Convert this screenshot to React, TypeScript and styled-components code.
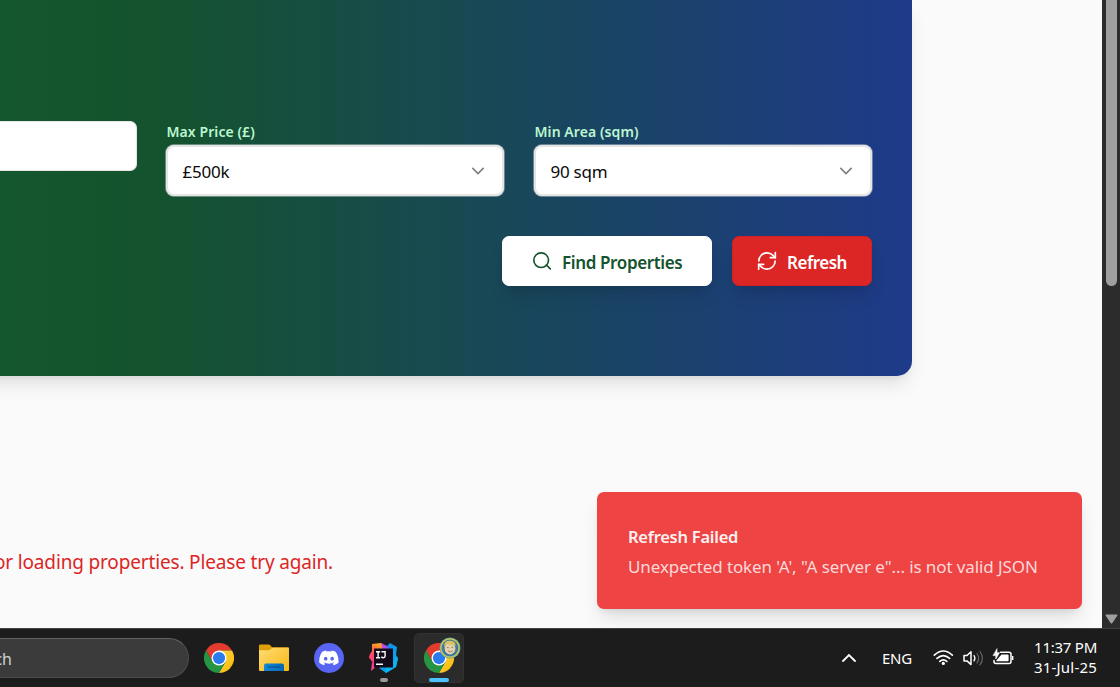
import React from 'react';
import styled, { createGlobalStyle } from 'styled-components';

const GlobalStyle = createGlobalStyle`
  * { box-sizing: border-box; }
  html, body { margin: 0; padding: 0; overflow: hidden; }
  body { font-family: 'Segoe UI', 'Noto Sans', 'Open Sans', sans-serif; }
`;

const Screen = styled.div`
  position: relative;
  width: 1120px;
  height: 687px;
  overflow: hidden;
  display: flex;
  flex-direction: column;
`;

const Browser = styled.div`
  display: flex;
  height: 628px;
`;

const Page = styled.main`
  width: 1102px;
  height: 628px;
  overflow: hidden;
  background: #fafafa;
`;

const Scrollbar = styled.div`
  width: 18px;
  background: #2c2c2c;
  display: flex;
  flex-direction: column;
  justify-content: space-between;
  align-items: center;
  padding-bottom: 4px;
`;

const Thumb = styled.div`
  width: 11px;
  height: 286px;
  margin-left: 1px;
  border-radius: 0 0 6px 6px;
  background: #9f9f9f;
`;

const Hero = styled.section`
  width: 952px;
  height: 376px;
  margin-left: -40px;
  border-radius: 0 0 15px 0;
  background: linear-gradient(to right, #166534 -570px, #14532d 191px, #1e3a8a 952px);
  box-shadow: 0 12px 19px -4px rgba(0, 0, 0, 0.1), 0 5px 8px -5px rgba(0, 0, 0, 0.1);
  padding: 121px 39px 0 40px;
`;

const Fields = styled.div`
  display: flex;
  gap: 28px;
  height: 77px;
`;

const TextInput = styled.div`
  width: 137px;
  height: 50px;
  background: #fff;
  border: 1px solid #e5e5e5;
  border-left: 0;
  border-radius: 0 7px 7px 0;
`;

const Field = styled.div`
  width: 340px;
`;

const T = styled.span<{ $size: number; $ls?: number; $weight?: number; $lh?: number; $color?: string }>`
  display: block;
  white-space: pre;
  font-size: ${p => p.$size}px;
  letter-spacing: ${p => p.$ls ?? 0}px;
  font-weight: ${p => p.$weight ?? 400};
  line-height: ${p => p.$lh ?? 20}px;
  color: ${p => p.$color ?? 'inherit'};
`;

const Label = styled(T)`
  margin: 0 0 2px 1.5px;
  padding-top: 1px;
`;

const Select = styled.div`
  height: 53px;
  border: 1px solid rgba(229, 229, 229, 0.4);
  border-radius: 9px;
  background: #fff;
  background-clip: padding-box;
  box-shadow: inset 0 0 0 2px #e5e5e5;
  display: flex;
  align-items: center;
  justify-content: space-between;
  padding: 0 18px 0 16.5px;
  ${T} { padding-top: 3px; }
`;

const Actions = styled.div`
  display: flex;
  justify-content: flex-end;
  gap: 20px;
  padding: 38px 1px 0 0;
`;

const Button = styled.div<{ $w: number; $pad: number; $bg: string; $fg: string; $edge: string }>`
  width: ${p => p.$w}px;
  height: 50px;
  padding-left: ${p => p.$pad}px;
  display: flex;
  align-items: center;
  border-radius: 7px;
  border: 1px solid ${p => p.$edge};
  background: ${p => p.$bg};
  color: ${p => p.$fg};
  box-shadow: 0 12px 19px -4px rgba(0, 0, 0, 0.12), 0 5px 8px -5px rgba(0, 0, 0, 0.1);
  svg { margin-right: 10px; flex: none; }
  ${T} { padding-top: 3px; }
`;

const Lower = styled.div`
  display: flex;
  justify-content: space-between;
  align-items: flex-start;
  padding: 116px 20px 0 0;
`;

const ErrorText = styled.div`
  width: 333px;
  margin-top: 56px;
  display: flex;
  justify-content: flex-end;
`;

const Toast = styled.div`
  width: 485px;
  height: 117px;
  padding: 32px 31px;
  border-radius: 7px;
  background: #ef4444;
  box-shadow: 0 12px 19px -4px rgba(0, 0, 0, 0.12), 0 5px 8px -5px rgba(0, 0, 0, 0.12);
`;

const Taskbar = styled.footer`
  height: 59px;
  background: #1c1c1c;
  border-top: 1px solid #414141;
  display: flex;
  align-items: center;
  color: #fff;
`;

const SearchBox = styled.div`
  width: 189px;
  height: 40px;
  border-radius: 0 20px 20px 0;
  background: #3b3b3b;
  border: 1px solid #4c4c4c;
  border-top-color: #626262;
  border-left: 0;
  display: flex;
  align-items: center;
`;

const SearchText = styled.div`
  width: 12px;
  padding-top: 2px;
  display: flex;
  justify-content: flex-end;
`;

const Apps = styled.div`
  display: flex;
  gap: 5px;
  margin-left: 5px;
`;

const AppTile = styled.div<{ $active?: boolean }>`
  position: relative;
  width: 50px;
  height: 50px;
  border-radius: 5px;
  display: flex;
  align-items: center;
  justify-content: center;
  background: ${p => (p.$active ? '#2b2b2b' : 'transparent')};
  border: 1px solid ${p => (p.$active ? '#323232' : 'transparent')};
`;

const Indicator = styled.i<{ $w: number; $c: string }>`
  position: absolute;
  bottom: 0;
  left: ${p => (48 - p.$w) / 2}px;
  width: ${p => p.$w}px;
  height: 4px;
  border-radius: 2px;
  background: ${p => p.$c};
`;

const Avatar = styled.svg`
  position: absolute;
  top: 3px;
  left: 24px;
`;

const Tray = styled.div`
  margin-left: auto;
  display: flex;
  align-items: center;
  padding-right: 23px;
`;

const Language = styled(T)`
  margin: 0 21px 0 25px;
`;

const Clock = styled.div`
  margin-left: 19px;
  margin-top: -3px;
  display: flex;
  flex-direction: column;
  align-items: flex-end;
`;

const Chevron = () => (
  <svg width="16" height="16" viewBox="0 0 16 16" fill="none" stroke="#7b7c80" strokeWidth="1.5">
    <path d="M2.3 4.9 8 10.6l5.7-5.7" />
  </svg>
);

const SearchIcon = () => (
  <svg width="20" height="20" viewBox="0 0 24 24" fill="none" stroke="currentColor" strokeWidth="2" strokeLinecap="round" strokeLinejoin="round">
    <circle cx="11" cy="11" r="8.8" />
    <path d="m22 21.5-4.7-4.7" />
  </svg>
);

const RefreshIcon = () => (
  <svg width="20" height="20" viewBox="0 0 24 24" fill="none" stroke="currentColor" strokeWidth="2" strokeLinecap="round" strokeLinejoin="round">
    <path d="M2.2 12a9.8 9.8 0 0 1 9.8-9.8 10.5 10.5 0 0 1 7.2 3L22 8" />
    <path d="M22 2v6h-6" />
    <path d="M21.8 12a9.8 9.8 0 0 1-9.8 9.8 10.5 10.5 0 0 1-7.2-3L2 16" />
    <path d="M8 16H2v6" />
  </svg>
);

const ChromeIcon = () => (
  <svg width="30" height="30" viewBox="0 0 48 48">
    <defs>
      <linearGradient id="cy" x1="0" y1="0" x2="1" y2="1"><stop offset="0" stopColor="#ffd54a" /><stop offset="1" stopColor="#f8b800" /></linearGradient>
    </defs>
    <path d="M24 12h20.8A24 24 0 0 0 3.2 12l10.4 18z" fill="#e33b2e" />
    <path d="M34.4 30 24 48A24 24 0 0 0 44.8 12H24z" fill="url(#cy)" />
    <path d="M13.6 30 3.2 12A24 24 0 0 0 24 48l10.4-18z" fill="#259544" />
    <circle cx="24" cy="24" r="12" fill="#fff" />
    <circle cx="24" cy="24" r="9.8" fill="#2a7bee" />
  </svg>
);

const FolderIcon = () => (
  <svg width="30" height="28" viewBox="0 0 30 28">
    <defs>
      <linearGradient id="fy" x1="0" y1="0" x2="1" y2="1"><stop offset="0" stopColor="#ffdc73" /><stop offset="1" stopColor="#f8b816" /></linearGradient>
      <linearGradient id="fb" x1="0" y1="0" x2="1" y2="0"><stop offset="0" stopColor="#1489d5" /><stop offset="1" stopColor="#0067b8" /></linearGradient>
    </defs>
    <path d="M0 1.5Q0 .5 1 .5h8.5q1 0 2 1L13 3.3h16q1 0 1 1V10H0z" fill="#dda006" />
    <path d="M0 6.2h9q1.5 0 2.5-.9l.8-.8q.8-.7 2-.7H29q1 0 1 1V26q0 1-1 1H1q-1 0-1-1z" fill="url(#fy)" />
    <path d="M5 27v-5.500q0-2 2-2h16q2 0 2 2V27z" fill="url(#fb)" />
    <rect x="8.5" y="22.5" width="13" height="1.1" rx=".5" fill="#084f86" />
  </svg>
);

const DiscordIcon = () => (
  <svg width="30" height="30" viewBox="0 0 30 30">
    <circle cx="15" cy="15" r="15" fill="#5865f2" />
    <g transform="translate(5.2 5.2) scale(.81)">
      <path fill="#fff" d="M20.317 4.37a19.79 19.79 0 0 0-4.885-1.515c-.21.376-.455.88-.623 1.275a18.3 18.3 0 0 0-5.618 0A13 13 0 0 0 8.56 2.855 19.7 19.7 0 0 0 3.68 4.37C.533 9.046-.32 13.58.1 18.057a19.9 19.9 0 0 0 5.993 3.03c.49-.66.91-1.36 1.27-2.08a12.8 12.8 0 0 1-1.92-.92l.47-.37c3.9 1.83 8.2 1.83 12.1 0l.47.37c-.61.36-1.25.67-1.92.92.36.72.78 1.42 1.27 2.08a19.8 19.8 0 0 0 6-3.03c.5-5.18-.84-9.67-3.52-13.69zM8.02 15.33c-1.18 0-2.16-1.09-2.16-2.42s.96-2.42 2.16-2.42c1.21 0 2.18 1.1 2.16 2.42 0 1.33-.95 2.42-2.16 2.42zm7.97 0c-1.18 0-2.15-1.09-2.15-2.42s.95-2.42 2.15-2.42c1.22 0 2.18 1.1 2.16 2.42 0 1.33-.94 2.42-2.16 2.42z" />
    </g>
  </svg>
);

const JetIcon = () => (
  <svg width="32" height="32" viewBox="0 0 32 32">
    <defs>
      <linearGradient id="jp" x1=".6" y1="0" x2=".4" y2="1"><stop offset="0" stopColor="#ffb01e" /><stop offset=".35" stopColor="#ff5a50" /><stop offset=".65" stopColor="#ff3487" /><stop offset="1" stopColor="#f04a9a" /></linearGradient>
      <linearGradient id="jb" x1="0" y1="0" x2="1" y2="1"><stop offset="0" stopColor="#3475f4" /><stop offset=".5" stopColor="#079be9" /><stop offset="1" stopColor="#08bdf4" /></linearGradient>
    </defs>
    <path d="m4 2 9-1 5 3v6l-3 17-6-3-6 5 1-8 1-2-4-3 1-4 2-3z" fill="url(#jp)" />
    <path d="m1 14 6-3v6l-3 3z" fill="#ff466f" />
    <path d="m13 1 6 3 3 4h-7z" fill="#b348f5" />
    <path d="m22 1 7 4-1 8 2 3-2 9-10 6-7-5 9-4V7l-1-3z" fill="url(#jb)" />
    <path d="m18 25 8-7 4-2-2 9-10 6z" fill="#0ab3ef" />
    <rect x="6" y="6.5" width="19" height="19" fill="#130b1c" />
    <path d="M8 9.7h4.2M8 15.7h4.2M10.100 9.7v6M13.500 9.7h3.600v4.400q0 1.700-1.800 1.700-1.100 0-1.900-1M8 22.300h7" fill="none" stroke="#fff" strokeWidth="1.4" />
  </svg>
);

const Face = () => (
  <Avatar width="22" height="22" viewBox="0 0 22 22">
    <circle cx="11" cy="11" r="10.5" fill="#5ba5ae" />
    <circle cx="11" cy="11" r="9.2" fill="none" stroke="#d5c744" strokeWidth="1.2" />
    <circle cx="11" cy="11" r="8.2" fill="#477a98" />
    <path d="M4.5 16q6-4 13 0-6.500 5-13 0" fill="#3a6fa8" />
    <ellipse cx="11" cy="11.4" rx="5.400" ry="6" fill="#e3d0ac" />
    <path d="M5.300 10Q4.500 4 10 3.700q6-.6 6.800 5L15 7.800q-5 1-7-1.500z" fill="#ddc45a" />
    <path d="M8 10.600h1.700M12.500 10.400h1.700M9 14q2.500 2 4.500-.2" fill="none" stroke="#85704c" strokeWidth=".8" />
  </Avatar>
);

const TrayIcons = () => (
  <svg width="82" height="24" viewBox="0 0 82 24" fill="none" stroke="#fff" strokeLinecap="round" strokeLinejoin="round">
    <g strokeWidth="1.6">
      <path d="M1.3 9.2q9-8.400 18 0M4 12.400q6.300-5.700 12.600 0M6.800 15.400q3.500-3 7 0" />
      <circle cx="10.3" cy="17.4" r="1.6" fill="#fff" stroke="none" />
    </g>
    <path d="M31 9.500h3l4-3.700v12.800l-4-3.700h-3z" strokeWidth="1.5" />
    <path d="M41 9.500q1.800 2.700 0 5.400" strokeWidth="1.3" />
    <path d="M44 7.500q3.400 4.700 0 9.400M47 5.500q4.800 6.700 0 13.400" stroke="#666" strokeWidth="1.2" />
    <path d="M67.500 6.200H76a2 2 0 0 1 2 2v7.400a2 2 0 0 1-2 2H63a2 2 0 0 1-2-2v-1" strokeWidth="1.5" />
    <path d="M68.500 8.500h6.100q1 0 1 1v4.800q0 1-1 1h-11q-.7 0-.3-.8z" fill="#fff" stroke="none" />
    <path d="M79 10h1.400v4H79z" fill="#fff" stroke="none" />
    <path d="M64 3v3.700h2.500L62.800 13V9.600h-2.500z" fill="#fff" strokeWidth=".6" />
  </svg>
);

export default function App() {
  return (
    <Screen>
      <GlobalStyle />
      <Browser>
        <Page>
          <Hero>
            <Fields>
              <TextInput />
              <Field>
                <Label $size={14} $ls={0.08} $weight={600} $lh={20} $color="#bbf7d0">Max Price (£)</Label>
                <Select><T $size={17} $ls={-0.25} $color="#0a0a0a">£500k</T><Chevron /></Select>
              </Field>
              <Field>
                <Label $size={14} $ls={0.08} $weight={600} $lh={20} $color="#bbf7d0">Min Area (sqm)</Label>
                <Select><T $size={17} $ls={-0.25} $color="#0a0a0a">90 sqm</T><Chevron /></Select>
              </Field>
            </Fields>
            <Actions>
              <Button $w={210} $pad={29} $bg="#fff" $fg="#14532d" $edge="#fff">
                <SearchIcon /><T $size={17} $ls={-0.37} $weight={600}>Find Properties</T>
              </Button>
              <Button $w={140} $pad={24} $bg="#dc2626" $fg="#fff" $edge="#d02222">
                <RefreshIcon /><T $size={17} $ls={-0.5} $weight={600}>Refresh</T>
              </Button>
            </Actions>
          </Hero>
          <Lower>
            <ErrorText><T $size={19} $ls={-0.16} $lh={28} $color="#dc2626">Error loading properties. Please try again.</T></ErrorText>
            <Toast>
              <T $size={16.5} $ls={-0.25} $weight={600} $lh={25} $color="#fef2f2">Refresh Failed</T>
              <T $size={17} $ls={-0.1} $lh={36} $color="#fcd9d9">{`Unexpected token 'A', "A server e"... is not valid JSON`}</T>
            </Toast>
          </Lower>
        </Page>
        <Scrollbar>
          <Thumb />
          <svg width="13" height="10" viewBox="0 0 13 10"><path d="M1.4.5h10.2q1.3 0 .6 1.2L7.4 9q-.9 1-1.8 0L.8 1.7Q.1.5 1.4.5z" fill="#9f9f9f" /></svg>
        </Scrollbar>
      </Browser>
      <Taskbar>
        <SearchBox><SearchText><T $size={16} $color="#cfcfcf">ch</T></SearchText></SearchBox>
        <Apps>
          <AppTile><ChromeIcon /></AppTile>
          <AppTile><FolderIcon /></AppTile>
          <AppTile><DiscordIcon /></AppTile>
          <AppTile><JetIcon /><Indicator $w={8} $c="#9a9a9a" /></AppTile>
          <AppTile $active><ChromeIcon /><Face /><Indicator $w={20} $c="#4cc2ff" /></AppTile>
        </Apps>
        <Tray>
          <svg width="16" height="16" viewBox="0 0 16 16" fill="none" stroke="#fff" strokeWidth="1.8" strokeLinecap="round"><path d="m2 11 6-6 6 6" /></svg>
          <Language $size={15} $ls={-0.2}>ENG</Language>
          <TrayIcons />
          <Clock>
            <T $size={15} $ls={-0.25}>11:37 PM</T>
            <T $size={15} $ls={0.2}>31-Jul-25</T>
          </Clock>
        </Tray>
      </Taskbar>
    </Screen>
  );
}
